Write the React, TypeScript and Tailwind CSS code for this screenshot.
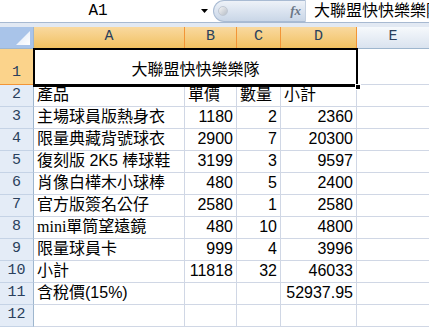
import React from "react";

const cjk = '"Liberation Sans", "Noto Sans CJK TC", sans-serif';
const mono = '"Liberation Mono", "Noto Sans CJK TC", monospace';

type Row = { n: number; a: React.ReactNode; b?: string; c?: string; d?: string; hdr?: boolean };

const rows: Row[] = [
  { n: 2, a: "產品", b: "單價", c: "數量", d: "小計", hdr: true },
  { n: 3, a: "主場球員版熱身衣", b: "1180", c: "2", d: "2360" },
  { n: 4, a: "限量典藏背號球衣", b: "2900", c: "7", d: "20300" },
  { n: 5, a: "復刻版 2K5 棒球鞋", b: "3199", c: "3", d: "9597" },
  { n: 6, a: "肖像白樺木小球棒", b: "480", c: "5", d: "2400" },
  { n: 7, a: "官方版簽名公仔", b: "2580", c: "1", d: "2580" },
  {
    n: 8,
    a: (
      <>
        <span style={{ fontFamily: '"Liberation Serif", serif' }}>mini</span>單筒望遠鏡
      </>
    ),
    b: "480",
    c: "10",
    d: "4800",
  },
  { n: 9, a: "限量球員卡", b: "999", c: "4", d: "3996" },
  { n: 10, a: "小計", b: "11818", c: "32", d: "46033" },
  { n: 11, a: "含稅價(15%)", d: "52937.95" },
  { n: 12, a: "" },
];

function RowHead({ n, sel }: { n: number; sel?: boolean }) {
  return (
    <div
      className={
        "flex items-end justify-center pb-[1px] border-r border-b text-[15px] leading-[20px] " +
        (sel
          ? "bg-[#fbd38b] border-r-[#f29536] border-b-[#f29536] text-[#2a3f5c]"
          : "bg-[#e4ecf7] border-r-[#9eb6ce] border-b-[#c5d3e6] text-[#2a3f5c]")
      }
      style={{ fontFamily: mono }}
    >
      {n}
    </div>
  );
}

function Cell({ children, right, hdr }: { children?: React.ReactNode; right?: boolean; hdr?: boolean }) {
  return (
    <div
      className={
        "flex items-end pb-[1px] px-[3px] border-r border-b border-[#d0d7e5] text-[16px] leading-[20px] whitespace-nowrap overflow-hidden text-black " +
        (right ? "justify-end" : "justify-start")
      }
      style={{ fontFamily: cjk }}
    >
      {children}
    </div>
  );
}

export default function App() {
  return (
    <div className="w-[429px] h-[327px] overflow-hidden bg-white select-none">
      {/* formula bar */}
      <div className="flex h-[22px] bg-white">
        <div className="w-[196px] flex items-center justify-center text-[16px] text-black" style={{ fontFamily: mono }}>
          A1
        </div>
        <div className="w-[17px] flex items-center justify-center">
          <svg width="7" height="4" viewBox="0 0 7 4">
            <path d="M0 0h7L3.5 4z" fill="#000" />
          </svg>
        </div>
        <div className="w-[93px] h-[22px] rounded-l-full bg-gradient-to-b from-[#eef2f8] via-[#dbe4f0] to-[#c9d6e7] border border-[#a9bbd3] border-r-[#c3cfdf] flex items-center justify-between pl-[4px] pr-[4px]">
          <div className="w-[10px] h-[10px] rounded-full bg-gradient-to-br from-[#f5f5f5] to-[#b7bec8] border border-[#c0c8d4]" />
          <span className="text-[13px] italic font-bold text-[#6b7686]" style={{ fontFamily: '"Liberation Serif", serif' }}>
            fx
          </span>
        </div>
        <div className="flex-1 flex items-center pl-[8px] overflow-hidden whitespace-nowrap text-[16px] text-black" style={{ fontFamily: cjk }}>
          大聯盟快快樂樂隊
        </div>
      </div>
      <div className="h-[5px] bg-[#e2e9f3] border-t border-[#a7b9d1]" />

      {/* grid */}
      <div className="grid grid-cols-[34px_151px_52px_44px_76px_1fr] grid-rows-[22px_36px_repeat(11,22px)]">
        {/* header row */}
        <div className="relative bg-[#a9c4e9] border-r border-b border-[#9eb6ce] overflow-hidden">
          <svg className="absolute right-[3px] bottom-[3px]" width="14" height="14" viewBox="0 0 14 14">
            <defs>
              <linearGradient id="tri" x1="0" y1="0" x2="1" y2="1">
                <stop offset="0" stopColor="#dfe9f7" />
                <stop offset="1" stopColor="#ffffff" />
              </linearGradient>
            </defs>
            <path d="M14 0V14H0z" fill="url(#tri)" />
          </svg>
        </div>
        {["A", "B", "C", "D"].map((l) => (
          <div
            key={l}
            className="flex items-center justify-center bg-gradient-to-b from-[#f9d99f] to-[#f1c15f] border-r border-b border-[#f29536] text-[15px] text-[#2a3f5c]"
            style={{ fontFamily: mono }}
          >
            {l}
          </div>
        ))}
        <div
          className="flex items-center justify-center bg-gradient-to-b from-[#f6f9fc] to-[#dae3ef] border-b border-[#9eb6ce] text-[15px] text-[#2a3f5c]"
          style={{ fontFamily: mono }}
        >
          E
        </div>

        {/* row 1 */}
        <RowHead n={1} sel />
        <div className="relative col-span-4 flex items-end justify-center pb-[3px] text-[16px] text-black" style={{ fontFamily: cjk }}>
          大聯盟快快樂樂隊
          <div className="absolute left-[-1px] top-[-1px] right-[-1px] bottom-[-2px] border-[2px] border-b-[3px] border-black pointer-events-none" />
          <div className="absolute right-[-4px] bottom-[-5px] w-[6px] h-[6px] bg-black border border-white" />
        </div>
        <div className="border-b border-[#d0d7e5]" />

        {rows.map((r) => (
          <React.Fragment key={r.n}>
            <RowHead n={r.n} />
            <Cell>{r.a}</Cell>
            <Cell right={!r.hdr}>{r.b}</Cell>
            <Cell right={!r.hdr}>{r.c}</Cell>
            <Cell right={!r.hdr}>{r.d}</Cell>
            <div className="border-b border-[#d0d7e5]" />
          </React.Fragment>
        ))}
      </div>
    </div>
  );
}
